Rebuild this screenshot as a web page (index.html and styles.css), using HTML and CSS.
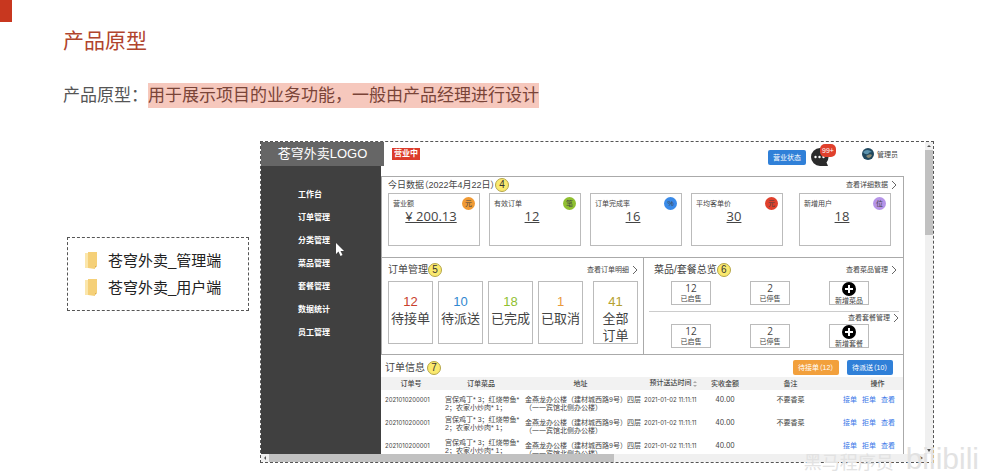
FILE: index.html
```html
<!DOCTYPE html>
<html lang="zh-CN">
<head>
<meta charset="utf-8">
<title>产品原型</title>
<meta name="viewport" content="width=device-width, initial-scale=1">
<link rel="stylesheet" href="styles.css">
</head>
<body>
<div class="slide">
  <div class="mark"></div>
  <h1>产品原型</h1>
  <p class="intro">产品原型：<mark>用于展示项目的业务功能，一般由产品经理进行设计</mark></p>
  <div class="stage">
    <ul class="folders">
      <li><svg viewBox="0 0 12 17"><path d="M0 1h3v15H0z" fill="#fbe6ab"/><path d="M3 0h9v14h-2v3L3 16z" fill="#f5d078"/><path d="M10 14h2l-2 2z" fill="#dcae4c"/></svg>苍穹外卖_管理端</li>
      <li><svg viewBox="0 0 12 17"><path d="M0 1h3v15H0z" fill="#fbe6ab"/><path d="M3 0h9v14h-2v3L3 16z" fill="#f5d078"/><path d="M10 14h2l-2 2z" fill="#dcae4c"/></svg>苍穹外卖_用户端</li>
    </ul>

    <div class="frame">
      <div class="view">
        <header class="top">
          <div class="logo">苍穹外卖LOGO</div>
          <span class="open">营业中</span>
          <div class="account">
            <button class="btn blue state" type="button">营业状态</button>
            <div class="message">
              <svg viewBox="0 0 18 18"><path d="M9 0a9 9 0 1 0 0 18h8l-1.500-3.500A9 9 0 0 0 9 0z" fill="#2b2b2b"/><g fill="#fff"><circle cx="4.500" cy="9" r="1.200"/><circle cx="8.500" cy="9" r="1.200"/><circle cx="12.500" cy="9" r="1.200"/></g></svg>
              <span class="count">99+</span>
            </div>
            <div class="user">
              <svg viewBox="0 0 12 12"><circle cx="6" cy="6" r="6" fill="#20485f"/><path d="M1 4q4-4 9 0-3 0-4 2-3 1-5-2z" fill="#5b93ae"/><path d="M4 8q4-3 6-1-1 3-4 3z" fill="#8a8a74"/></svg>
              <span>管理员</span>
            </div>
          </div>
        </header>

        <div class="body">
          <nav>
            <a href="#">工作台</a>
            <a href="#">订单管理</a>
            <a href="#">分类管理</a>
            <a href="#">菜品管理</a>
            <a href="#">套餐管理</a>
            <a href="#">数据统计</a>
            <a href="#">员工管理</a>
            <svg class="pointer" viewBox="0 0 10 15"><path d="M1 1v11l2.500-2.500L5.500 14l2-1-2-4H9z" fill="#fff"/></svg>
          </nav>

          <main>
            <section class="panel today">
              <div class="bar">
                <h2 class="small">今日数据（2022年4月22日）</h2><span class="step">4</span>
                <a class="more" href="#">查看详细数据<svg viewBox="0 0 6 10"><path d="M1 1l4 4-4 4"/></svg></a>
              </div>
              <div class="stats">
                <div class="stat"><div class="label">营业额<i class="unit orange">元</i></div><b>¥ 200.13</b></div>
                <div class="stat"><div class="label">有效订单<i class="unit green">笔</i></div><b>12</b></div>
                <div class="stat"><div class="label">订单完成率<i class="unit azure">%</i></div><b>16</b></div>
                <div class="stat"><div class="label">平均客单价<i class="unit red">元</i></div><b>30</b></div>
                <div class="stat"><div class="label">新增用户<i class="unit violet">位</i></div><b>18</b></div>
              </div>
            </section>

            <div class="pair">
              <section class="panel orders">
                <div class="bar">
                  <h2>订单管理</h2><span class="step">5</span>
                  <a class="more" href="#">查看订单明细<svg viewBox="0 0 6 10"><path d="M1 1l4 4-4 4"/></svg></a>
                </div>
                <div class="tiles">
                  <div class="tile"><b class="t-red">12</b>待接单</div>
                  <div class="tile"><b class="t-blue">10</b>待派送</div>
                  <div class="tile"><b class="t-green">18</b>已完成</div>
                  <div class="tile"><b class="t-orange">1</b>已取消</div>
                  <div class="tile"><b class="t-olive">41</b>全部<br>订单</div>
                </div>
              </section>

              <section class="panel menu">
                <div class="bar">
                  <h2>菜品/套餐总览</h2><span class="step">6</span>
                  <a class="more" href="#">查看菜品管理<svg viewBox="0 0 6 10"><path d="M1 1l4 4-4 4"/></svg></a>
                </div>
                <div class="boxes">
                  <div class="box"><b>12</b>已启售</div>
                  <div class="box"><b>2</b>已停售</div>
                  <button class="box" type="button"><svg viewBox="0 0 14 14"><circle cx="7" cy="7" r="7"/><path d="M7 3v8M3 7h8" stroke="#fff" stroke-width="2"/></svg>新增菜品</button>
                </div>
                <div class="bar second">
                  <a class="more" href="#">查看套餐管理<svg viewBox="0 0 6 10"><path d="M1 1l4 4-4 4"/></svg></a>
                </div>
                <div class="boxes">
                  <div class="box"><b>12</b>已启售</div>
                  <div class="box"><b>2</b>已停售</div>
                  <button class="box" type="button"><svg viewBox="0 0 14 14"><circle cx="7" cy="7" r="7"/><path d="M7 3v8M3 7h8" stroke="#fff" stroke-width="2"/></svg>新增套餐</button>
                </div>
              </section>
            </div>

            <section class="panel info">
              <div class="bar">
                <h2>订单信息</h2><span class="step">7</span>
                <div class="actions">
                  <button class="btn amber" type="button">待接单（12）</button>
                  <button class="btn blue" type="button">待派送（10）</button>
                </div>
              </div>
              <table>
                <colgroup><col class="c-id"><col class="c-dish"><col class="c-addr"><col class="c-time"><col class="c-pay"><col class="c-note"><col class="c-op"></colgroup>
                <thead>
                  <tr><th>订单号</th><th>订单菜品</th><th>地址</th><th>预计送达时间 <svg class="sort" viewBox="0 0 4 8"><path d="M2 1l2 2H0zM2 7l2-2H0z" fill="#aaa"/></svg></th><th>实收金额</th><th>备注</th><th class="op">操作</th></tr>
                </thead>
                <tbody>
                  <tr><td class="num">2021010200001</td><td class="dish">宫保鸡丁* 3；红烧带鱼* 2；农家小炒肉* 1；</td><td>金燕龙办公楼（建材城西路9号）四层<br>（一一宾馆北侧办公楼）</td><td class="num">2021-01-02 11:11:11</td><td class="mid">40.00</td><td class="mid">不要香菜</td><td class="op"><a href="#">接单</a><a href="#">拒单</a><a href="#">查看</a></td></tr>
                  <tr><td class="num">2021010200001</td><td class="dish">宫保鸡丁* 3；红烧带鱼* 2；农家小炒肉* 1；</td><td>金燕龙办公楼（建材城西路9号）四层<br>（一一宾馆北侧办公楼）</td><td class="num">2021-01-02 11:11:11</td><td class="mid">40.00</td><td class="mid">不要香菜</td><td class="op"><a href="#">接单</a><a href="#">拒单</a><a href="#">查看</a></td></tr>
                  <tr><td class="num">2021010200001</td><td class="dish">宫保鸡丁* 3；红烧带鱼* 2；农家小炒肉* 1；</td><td>金燕龙办公楼（建材城西路9号）四层<br>（一一宾馆北侧办公楼）</td><td class="num">2021-01-02 11:11:11</td><td class="mid">40.00</td><td class="mid"></td><td class="op"><a href="#">接单</a><a href="#">拒单</a><a href="#">查看</a></td></tr>
                </tbody>
              </table>
            </section>
          </main>
        </div>
      </div>
      <div class="vscroll"><svg viewBox="0 0 8 8"><path d="M4 3l2 2H2z"/></svg><i></i><svg viewBox="0 0 8 8"><path d="M4 6L2 3h4z"/></svg></div>
      <div class="hscroll"><svg viewBox="0 0 8 8"><path d="M3 4l2-2v4z"/></svg><i></i><svg viewBox="0 0 8 8"><path d="M6 4L3 2v4z"/></svg></div>
    </div>
  </div>
  <div class="watermark"><span>黑马程序员</span><em>bilibili</em></div>
</div>
</body>
</html>
```
FILE: styles.css
```css
* { box-sizing: border-box; }

body {
  margin: 0;
  background: #fff;
  color: #444;
  font-family: "Liberation Sans", "Noto Sans CJK SC", sans-serif;
}

h1, h2, p, ul { margin: 0; padding: 0; font-weight: 400; }
a { color: inherit; text-decoration: none; }
button { margin: 0; padding: 0; font-family: inherit; cursor: pointer; }
b, i, em { font-weight: 400; font-style: normal; }
svg { display: block; flex: none; }

.slide {
  position: relative;
  min-height: 472px;
  padding: 0 63px;
  overflow: hidden;
}

.mark {
  width: 12px;
  height: 22px;
  margin-left: -63px;
  background: #c8371f;
}

h1 {
  margin-top: 4px;
  color: #b0442c;
  font-size: 21px;
  line-height: 30px;
}

.intro {
  margin-top: 27px;
  color: #555;
  font-size: 17px;
  line-height: 25px;
}

.intro mark {
  display: inline-block;
  background: #f6c8bd;
  color: #7a4438;
}

.stage {
  display: flex;
  align-items: flex-start;
  gap: 11px;
  margin: 33px 0 0 4px;
}

.folders {
  flex: none;
  width: 182px;
  margin-top: 96px;
  padding: 9px 17px;
  border: 1px dashed #555;
  color: #222;
  font-size: 15px;
  line-height: 27px;
  list-style: none;
}

.folders li { display: flex; align-items: center; gap: 11px; white-space: nowrap; }
.folders svg { width: 12px; height: 17px; }

.frame {
  flex: 1;
  min-width: 0;
  display: grid;
  grid-template: 312px 8px / minmax(0, 1fr) 8px;
  border: 1px dashed #555;
}

.view { overflow: hidden; background: #fff; }

.top { display: flex; align-items: center; height: 24px; }

.logo {
  width: 123px;
  background: #666;
  color: #fff;
  font-size: 13px;
  line-height: 24px;
  text-align: center;
}

.open {
  margin-left: 8px;
  padding: 0 2px;
  background: #dc3c2c;
  color: #fff;
  font-size: 8px;
  font-weight: 700;
  line-height: 12px;
}

.account {
  flex: 1;
  display: flex;
  align-items: center;
  padding-right: 27px;
}

.btn {
  border: 0;
  border-radius: 2px;
  color: #fff;
  font-size: 7px;
  line-height: 15px;
  white-space: nowrap;
}

.blue { background: #3080d8; }
.amber { background: #f2a03c; }
.state { width: 38px; margin: 6px 5px 0 auto; }

.message { position: relative; margin-top: 6px; }
.message svg { width: 18px; height: 18px; }

.count {
  position: absolute;
  top: -4px;
  left: 9px;
  width: 16px;
  border-radius: 5px;
  background: #e0402c;
  color: #fff;
  font-size: 7px;
  line-height: 13px;
  text-align: center;
}

.user {
  display: flex;
  align-items: center;
  gap: 3px;
  margin-left: 33px;
  font-size: 7px;
}

.user svg { width: 12px; height: 12px; }

.body { display: flex; align-items: flex-start; }

nav {
  position: relative;
  flex: none;
  width: 120px;
  height: 288px;
  padding-top: 17px;
  background: #404040;
  color: #fff;
  font-size: 8px;
  font-weight: 700;
  line-height: 23px;
}

nav a { display: block; padding-left: 37px; }

.pointer {
  position: absolute;
  top: 76px;
  left: 74px;
  width: 10px;
  height: 15px;
}

main { flex: 1; min-width: 0; padding: 10px 21px 0 0; }

.panel { border: 1px solid #aaa; }

.bar { display: flex; align-items: center; }

h2 { font-size: 10px; line-height: 16px; white-space: nowrap; }
h2.small { font-size: 9px; font-feature-settings: "palt"; }

.step {
  width: 14px;
  border: 1px solid #b5a64a;
  border-radius: 50%;
  background: #fae96e;
  color: #333;
  font-size: 10px;
  line-height: 12px;
  text-align: center;
}

.more {
  display: flex;
  align-items: center;
  gap: 3px;
  margin-left: auto;
  font-size: 7px;
  line-height: 10px;
  white-space: nowrap;
}

.more svg {
  width: 6px;
  height: 10px;
  fill: none;
  stroke: #666;
}

.today { height: 82px; padding: 0 12px 0 6px; }
.today .more { margin-right: -6px; }

.stats { display: flex; gap: 9px; }

.stat {
  flex: 0 1 92px;
  height: 53px;
  padding: 3px 4px;
  border: 1px solid #bbb;
  text-align: center;
}

.stat:last-child { margin-left: auto; }

.label {
  display: flex;
  justify-content: space-between;
  font-size: 7px;
  line-height: 13px;
}

.unit {
  width: 13px;
  border-radius: 50%;
  color: #444;
  text-align: center;
}

.orange { background: #f09a34; }
.green { background: #8fbf30; }
.azure { background: #3a8ae8; }
.red { background: #e0402c; }
.violet { background: #b694e8; }

.stat b {
  display: block;
  margin-top: -1px;
  padding-right: 6px;
  font-family: "Open Sans", sans-serif;
  font-size: 13px;
  line-height: 15px;
  text-decoration: underline;
}

.pair { display: flex; margin-top: -1px; }
.pair .panel { flex: 1; height: 98px; }

.orders { padding: 0 5px 0 6px; }
.pair .bar { height: 23px; }

.tiles { display: flex; gap: 5px; }

.tile {
  flex: 0 1 45px;
  height: 63px;
  padding-top: 11px;
  border: 1px solid #bbb;
  font-size: 13px;
  line-height: 17px;
  text-align: center;
  white-space: nowrap;
}

.tile:last-child { margin-left: auto; }
.tile b { display: block; }

.t-red { color: #c8402c; }
.t-blue { color: #3088d0; }
.t-green { color: #8fbf30; }
.t-orange { color: #e89a3c; }
.t-olive { color: #b5a030; }

.menu { margin-left: -1px; padding: 0 4px 0 5px; }
.menu .bar { padding: 0 2px 0 5px; }
.menu .second { justify-content: flex-end; height: 13px; margin-top: 6px; padding: 0; border-top: 1px solid #ccc; }

.boxes { display: flex; justify-content: space-between; padding: 0 30px 0 22px; }

.box {
  display: flex;
  flex-direction: column;
  align-items: center;
  width: 40px;
  height: 24px;
  border: 1px solid #bbb;
  background: #fff;
  color: #444;
  font-size: 7px;
  line-height: 9px;
}

.box b {
  font-family: "Open Sans", sans-serif;
  font-size: 10px;
  line-height: 12px;
}

.box svg { width: 14px; height: 14px; }

.info { margin-top: -1px; padding-top: 3px; border-left: 0; }
.info .bar { height: 19px; padding: 0 10px 0 4px; }
.info .step { margin-left: 2px; }

.actions { display: flex; gap: 8px; margin-left: auto; }
.actions .btn { width: 46px; font-feature-settings: "palt"; }

table {
  width: 100%;
  border-collapse: collapse;
  table-layout: fixed;
  font-size: 7px;
  line-height: 8px;
}

.c-id { width: 60px; }
.c-dish { width: 80px; }
.c-addr { width: 119px; }
.c-time { width: 67px; }
.c-pay { width: 36px; }
.c-note { width: 95px; }

th {
  padding: 0;
  height: 13px;
  background: #f2f2f2;
  font-weight: 500;
  white-space: nowrap;
}

.sort { display: inline-block; width: 4px; height: 8px; vertical-align: middle; }

td {
  height: 23px;
  padding: 6px 0 0 4px;
  vertical-align: top;
  white-space: nowrap;
}

td.dish { white-space: normal; }
tr + tr td.dish { padding-top: 3px; }
td.num { font-family: Inter, sans-serif; font-size: 6px; }
td.mid { padding-left: 0; font-family: Inter, "Noto Sans CJK SC", sans-serif; text-align: center; }

td.op { padding: 6px 8px 0 0; color: #3a78e8; text-align: right; }
td.op a + a { margin-left: 5px; }
th.op { padding-left: 14px; }

.vscroll, .hscroll { display: flex; background: #f0f0f0; }
.vscroll { flex-direction: column; }
.hscroll { grid-column: 1; }
.vscroll svg, .hscroll svg { width: 8px; height: 8px; fill: #555; }
.vscroll i { height: 85px; background: #c1c1c1; }
.hscroll i { width: 52%; background: #c1c1c1; }
.vscroll svg:last-child { margin-top: auto; }
.hscroll svg:last-child { margin-left: auto; }

.watermark {
  position: absolute;
  right: 18px;
  bottom: -6px;
  display: flex;
  align-items: baseline;
  gap: 12px;
  color: #e2e2e2;
  font-size: 18px;
  line-height: 30px;
}

.watermark em { font-size: 30px; }
```
